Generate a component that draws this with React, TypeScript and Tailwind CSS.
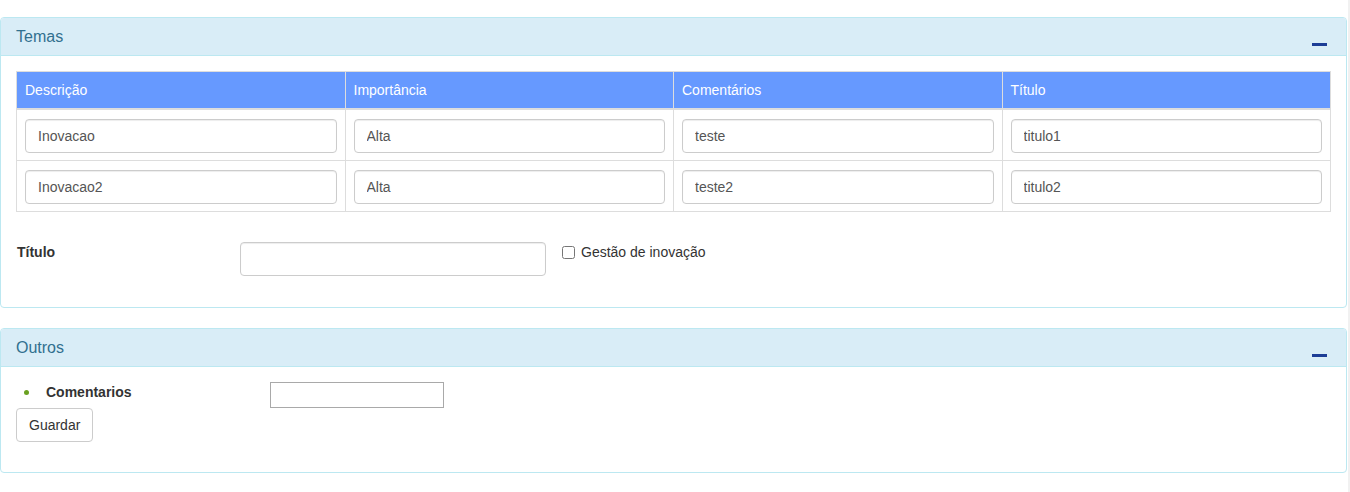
import React from 'react';

const rows = [
  { descricao: 'Inovacao', importancia: 'Alta', comentarios: 'teste', titulo: 'titulo1' },
  { descricao: 'Inovacao2', importancia: 'Alta', comentarios: 'teste2', titulo: 'titulo2' },
];

const Panel: React.FC<{ title: string; children: React.ReactNode }> = ({ title, children }) => (
  <div className="border border-[#bce8f1] rounded-[4px] bg-white">
    <div className="flex justify-between items-start bg-[#d9edf7] border-b border-[#bce8f1] rounded-t-[3px] h-[38px] px-[15px]">
      <h3 className="text-[16px] leading-[17.6px] pt-[10px] text-[#31708f]">{title}</h3>
      <span className="block w-[15px] h-[3px] mt-[25px] mr-[4px] bg-[#1c3d96]" />
    </div>
    {children}
  </div>
);

const cellInput = 'w-full h-[34px] px-[12px] border border-[#ccc] rounded-[4px] text-[14px] text-[#555] shadow-[inset_0_1px_1px_rgba(0,0,0,0.075)] outline-none';

export default function App() {
  return (
    <div className="flex min-h-[492px] bg-white text-[14px] leading-[20px] text-[#333] font-['Liberation_Sans',Arial,sans-serif]">
      <div className="w-[1347px] pt-[17px]">
        <Panel title="Temas">
          <div className="px-[15px] pt-[15px] pb-[31px]">
            <table className="w-full table-fixed border-collapse">
              <thead>
                <tr className="bg-[#6699ff] text-white text-left">
                  <th className="font-normal px-[8px] py-[8px] h-[37px] border border-[#ddd] border-b-2">Descrição</th>
                  <th className="font-normal px-[8px] py-[8px] border border-[#ddd] border-b-2">Importância</th>
                  <th className="font-normal px-[8px] py-[8px] border border-[#ddd] border-b-2">Comentários</th>
                  <th className="font-normal px-[8px] py-[8px] border border-[#ddd] border-b-2">Título</th>
                </tr>
              </thead>
              <tbody>
                {rows.map((r) => (
                  <tr key={r.titulo}>
                    <td className="px-[8px] pt-[9px] pb-[7px] border border-[#ddd]"><input className={cellInput} defaultValue={r.descricao} /></td>
                    <td className="px-[8px] pt-[9px] pb-[7px] border border-[#ddd]"><input className={cellInput} defaultValue={r.importancia} /></td>
                    <td className="px-[8px] pt-[9px] pb-[7px] border border-[#ddd]"><input className={cellInput} defaultValue={r.comentarios} /></td>
                    <td className="px-[8px] pt-[9px] pb-[7px] border border-[#ddd]"><input className={cellInput} defaultValue={r.titulo} /></td>
                  </tr>
                ))}
              </tbody>
            </table>

            <div className="flex items-start mt-[30px]">
              <label className="w-[224px] pl-[1px] font-bold">Título</label>
              <input className="w-[306px] h-[34px] px-[12px] border border-[#ccc] rounded-[4px] shadow-[inset_0_1px_1px_rgba(0,0,0,0.075)] outline-none" />
              <label className="flex items-center ml-[16px] h-[20px]">
                <input type="checkbox" className="w-[13px] h-[13px] m-0" />
                <span className="ml-[6px]">Gestão de inovação</span>
              </label>
            </div>
          </div>
        </Panel>

        <div className="mt-[20px]">
          <Panel title="Outros">
            <div className="px-[15px] pt-[15px] pb-[30px]">
              <div className="flex items-start">
                <div className="flex items-center w-[254px] h-[20px]">
                  <span className="block w-[5px] h-[5px] ml-[8px] rounded-full bg-[#6aa121]" />
                  <span className="ml-[17px] font-bold">Comentarios</span>
                </div>
                <input className="w-[174px] h-[26px] border border-[#a9a9a9] outline-none" />
              </div>
              <button className="h-[34px] px-[12px] border border-[#ccc] rounded-[4px] bg-white text-[#333]">Guardar</button>
            </div>
          </Panel>
        </div>
      </div>
      <div className="ml-auto w-[2px] bg-[#f1f1f1]" />
    </div>
  );
}
